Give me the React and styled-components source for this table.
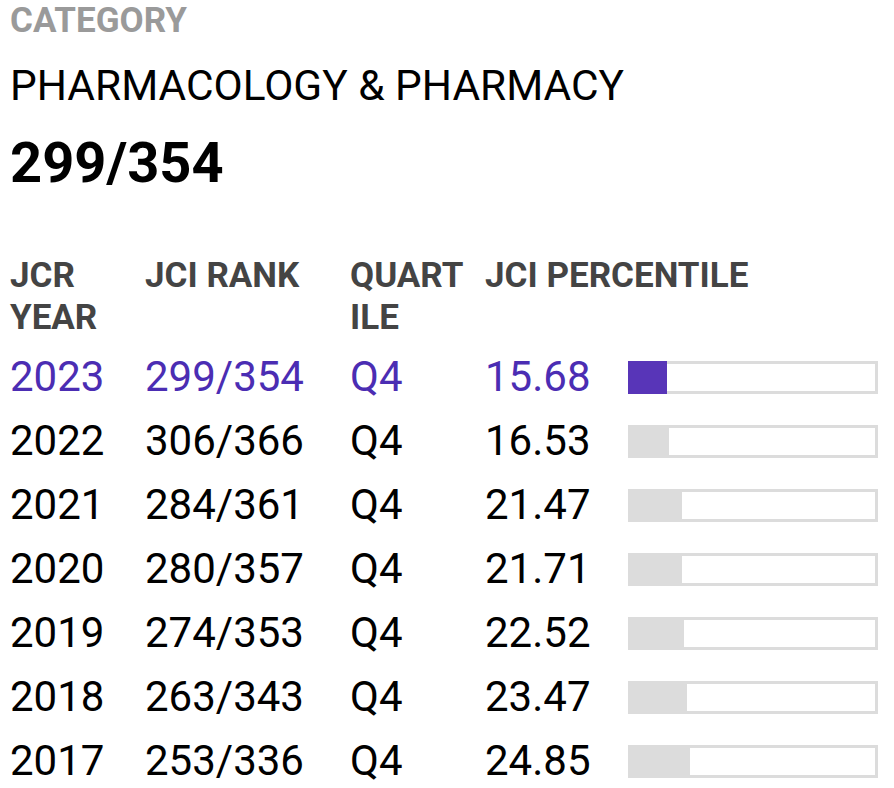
import styled, { createGlobalStyle } from "styled-components"

const Global = createGlobalStyle`
body {
  margin: 0;
  background: #fff;
  font-family: Roboto, "Liberation Sans", sans-serif;
}`

const Page = styled.main`
  padding: 1px 10px 0 10px;
`

const Label = styled.div`
  color: #9a9a9a;
  font-size: 35px;
  font-weight: 700;
  line-height: 40px;
`

const Category = styled.h1`
  margin: 20px 0 0 0;
  color: #000;
  font-size: 42.4px;
  font-weight: 400;
  line-height: 50px;
`

const Rank = styled.div`
  margin-top: 19px;
  color: #000;
  font-size: 56px;
  font-weight: 700;
  line-height: 66px;
`

const Table = styled.div`
  margin-top: 59px;
  display: grid;
  grid-template-columns: 135px 205px 135px 143px 250px;
`

const Head = styled.div`
  grid-column: ${(p) => (p.$wide ? "span 2" : "auto")};
  color: #444;
  font-size: 35px;
  font-weight: 700;
  line-height: 42px;
  padding-right: 20px;
  overflow-wrap: anywhere;
  margin-bottom: 6px;
`

const Cell = styled.div`
  color: ${(p) => (p.$current ? "#4b2db3" : "#000")};
  font-size: 42px;
  line-height: 64px;
  white-space: nowrap;
`

const BarCell = styled.div`
  display: flex;
  align-items: center;
  height: 64px;
`

const Track = styled.div`
  display: flex;
  width: 250px;
  height: 33px;
  background: #fff;
  box-shadow: inset 0 0 0 3px #dcdcdc;
`

const Fill = styled.div`
  height: 100%;
  background: ${(p) => (p.$current ? "#5835b8" : "#dcdcdc")};
`

const rows = [
  ["2023", "299/354", "Q4", "15.68"],
  ["2022", "306/366", "Q4", "16.53"],
  ["2021", "284/361", "Q4", "21.47"],
  ["2020", "280/357", "Q4", "21.71"],
  ["2019", "274/353", "Q4", "22.52"],
  ["2018", "263/343", "Q4", "23.47"],
  ["2017", "253/336", "Q4", "24.85"],
]

export default function App() {
  return (
    <Page>
      <Global />
      <Label>CATEGORY</Label>
      <Category>PHARMACOLOGY &amp; PHARMACY</Category>
      <Rank>299/354</Rank>
      <Table>
        <Head>JCR YEAR</Head>
        <Head>JCI RANK</Head>
        <Head>QUARTILE</Head>
        <Head $wide>JCI PERCENTILE</Head>
        {rows.map((r, i) =>
          [
            <Cell key={r[0] + "y"} $current={i === 0}>{r[0]}</Cell>,
            <Cell key={r[0] + "r"} $current={i === 0}>{r[1]}</Cell>,
            <Cell key={r[0] + "q"} $current={i === 0}>{r[2]}</Cell>,
            <Cell key={r[0] + "p"} $current={i === 0}>{r[3]}</Cell>,
            <BarCell key={r[0] + "b"}>
              <Track>
                <Fill $current={i === 0} style={{ width: r[3] + "%" }} />
              </Track>
            </BarCell>,
          ]
        )}
      </Table>
    </Page>
  )
}
